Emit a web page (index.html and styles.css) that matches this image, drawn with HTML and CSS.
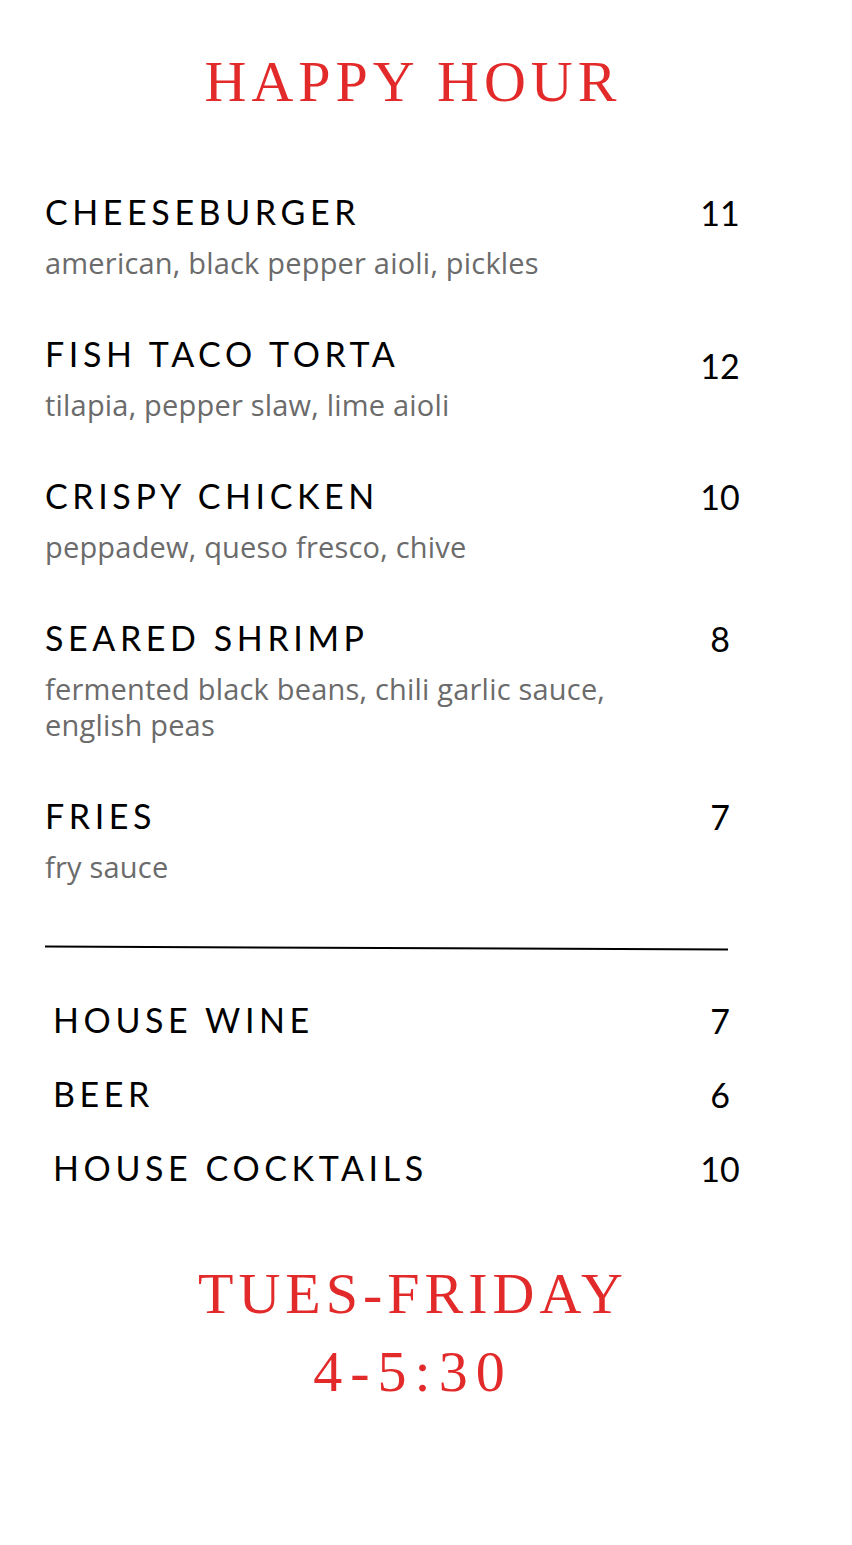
FILE: index.html
```html
<!DOCTYPE html>
<html lang="en">
<head>
<meta charset="utf-8">
<title>Happy Hour</title>
<link rel="stylesheet" href="styles.css">
</head>
<body>
<main class="menu">
  <h1 class="title">HAPPY HOUR</h1>

  <section class="items">
    <div class="item">
      <div class="item-text">
        <div class="name">CHEESEBURGER</div>
        <div class="desc">american, black pepper aioli, pickles</div>
      </div>
      <div class="price">11</div>
    </div>
    <div class="item">
      <div class="item-text">
        <div class="name">FISH TACO TORTA</div>
        <div class="desc">tilapia, pepper slaw, lime aioli</div>
      </div>
      <div class="price price-low">12</div>
    </div>
    <div class="item">
      <div class="item-text">
        <div class="name">CRISPY CHICKEN</div>
        <div class="desc">peppadew, queso fresco, chive</div>
      </div>
      <div class="price">10</div>
    </div>
    <div class="item">
      <div class="item-text">
        <div class="name">SEARED SHRIMP</div>
        <div class="desc">fermented black beans, chili garlic sauce,<br>english peas</div>
      </div>
      <div class="price">8</div>
    </div>
    <div class="item">
      <div class="item-text">
        <div class="name">FRIES</div>
        <div class="desc">fry sauce</div>
      </div>
      <div class="price">7</div>
    </div>
  </section>

  <div class="divider">
    <svg width="684" height="6" viewBox="0 0 684 6"><line x1="0" y1="1.5" x2="683" y2="4.5" stroke="#000" stroke-width="2"/></svg>
  </div>

  <section class="drinks">
    <div class="drink"><div class="name">HOUSE WINE</div><div class="price">7</div></div>
    <div class="drink"><div class="name">BEER</div><div class="price">6</div></div>
    <div class="drink"><div class="name">HOUSE COCKTAILS</div><div class="price">10</div></div>
  </section>

  <footer class="hours">
    <div class="hours-line">TUES-FRIDAY</div>
    <div class="hours-line hours-time">4-5:30</div>
  </footer>
</main>
</body>
</html>
```

FILE: styles.css
```css
html, body {
  margin: 0;
  padding: 0;
  background: #ffffff;
}

.menu {
  width: 852px;
  height: 1545px;
  box-sizing: border-box;
  padding-top: 53px;
  font-family: Lato, "Open Sans", sans-serif;
}

.title {
  margin: 0;
  padding-right: 26px;
  text-align: center;
  font-family: "Liberation Serif", serif;
  font-weight: normal;
  font-size: 58px;
  line-height: 58px;
  letter-spacing: 5px;
  color: #e32a2a;
}

.items {
  margin-top: 81px;
  display: flex;
  flex-direction: column;
  gap: 53px;
}

.item {
  display: grid;
  grid-template-columns: 1fr 84px;
  padding: 0 90px 0 45px;
}

.item-text {
  display: flex;
  flex-direction: column;
  gap: 13px;
}

.name {
  font-size: 34px;
  line-height: 40px;
  letter-spacing: 4.6px;
  color: #000;
}

.desc {
  font-family: "Open Sans", sans-serif;
  font-size: 29px;
  line-height: 36px;
  letter-spacing: 0.2px;
  color: #6b6b6b;
}

.price {
  font-size: 34px;
  line-height: 40px;
  text-align: center;
  color: #000;
  padding-top: 1px;
}

.price-low {
  padding-top: 12px;
}

.divider {
  margin-top: 60px;
  padding-left: 45px;
  height: 6px;
}

.divider svg {
  display: block;
}

.drinks {
  margin-top: 49px;
  display: flex;
  flex-direction: column;
  gap: 33px;
}

.drink {
  display: grid;
  grid-template-columns: 1fr 84px;
  padding: 0 90px 0 53px;
}

.hours {
  margin-top: 66px;
  padding-right: 26px;
  text-align: center;
  font-family: "Liberation Serif", serif;
  color: #e32a2a;
}

.hours-line {
  font-size: 58px;
  line-height: 78px;
  letter-spacing: 5px;
}

.hours-time {
  letter-spacing: 8px;
}
```
